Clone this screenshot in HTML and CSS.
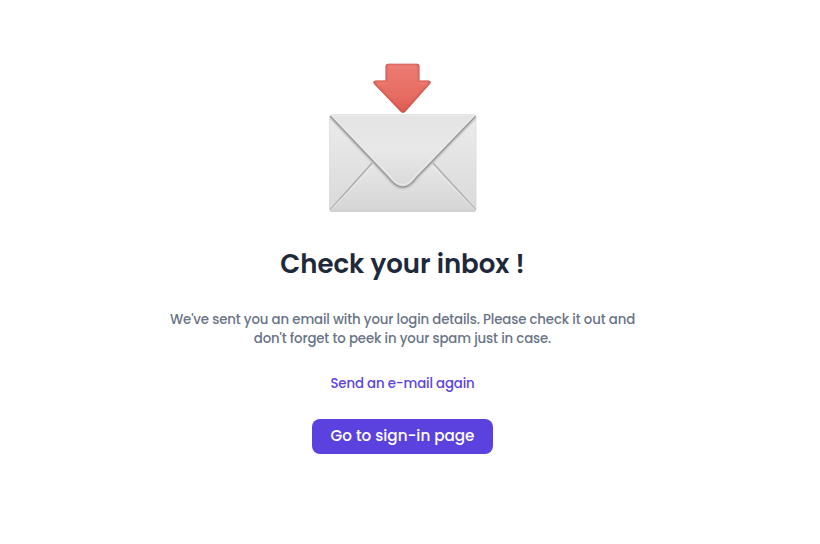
FILE: index.html
```html
<!DOCTYPE html>
<html lang="en">
<head>
<meta charset="utf-8">
<title>Check your inbox</title>
<link rel="stylesheet" href="styles.css">
</head>
<body>
<main class="confirmation">
  <svg class="illustration" viewBox="0 0 150 154" aria-hidden="true">
    <defs>
      <linearGradient id="back" x1="0" y1="0" x2="0" y2="1"><stop offset="0" stop-color="#ececed"/><stop offset="1" stop-color="#d9d9da"/></linearGradient>
      <linearGradient id="bottom" x1="0" y1="0" x2="0" y2="1"><stop offset="0" stop-color="#e7e7e8"/><stop offset=".9" stop-color="#d7d7d8"/><stop offset="1" stop-color="#d0d0d1"/></linearGradient>
      <linearGradient id="flap" x1="0" y1="0" x2="0" y2="1"><stop offset="0" stop-color="#e4e4e5"/><stop offset=".5" stop-color="#e8e8e9"/><stop offset="1" stop-color="#d9d9da"/></linearGradient>
      <linearGradient id="arrow" x1="0" y1="0" x2="0" y2="1"><stop offset="0" stop-color="#e8776e"/><stop offset=".12" stop-color="#ec7a71"/><stop offset=".65" stop-color="#e66c61"/><stop offset="1" stop-color="#d9564c"/></linearGradient>
      <clipPath id="envelope"><rect x="1.3" y="53.5" width="147" height="97.5" rx="3"/></clipPath>
      <clipPath id="arrow-shape"><path d="M16.500 2H44Q47 2 47 5V19H56Q60 20 57 23L33 50Q30.500 52.500 28 50L2 23Q-1 20 3 19H13V5Q13 2 16.500 2Z"/></clipPath>
      <filter id="soft" x="-20%" y="-20%" width="140%" height="140%"><feGaussianBlur stdDeviation=".8"/></filter>
    </defs>
    <g clip-path="url(#envelope)">
      <rect x="1" y="53" width="148" height="99" fill="url(#back)"/>
      <path d="M1 151L45 103L75 128L105 103L149 151Z" fill="url(#bottom)"/>
      <path d="M2 149L44 102M148 149L105 102" fill="none" stroke="#adadaf" stroke-width="1.400"/>
      <path d="M1 150.700L45 105M149 150.700L105 105" fill="none" stroke="#efefef" stroke-width=".8"/>
      <path d="M2 55L61 117Q75 135 88 117L148 55" fill="none" stroke="#9c9c9f" stroke-width="2.500" filter="url(#soft)"/>
      <path d="M2 53L61 116Q75 135 88 116L148 53Z" fill="url(#flap)"/>
      <path d="M2 55L61 117Q75 135 88 117L148 55" fill="none" stroke="#909094" stroke-width="1"/>
      <path d="M4 55L62 115Q75 132 87 115L146 55" fill="none" stroke="#eeeeef" stroke-width="1"/>
      <rect x="1.300" y="53.500" width="147" height="97.500" rx="3" fill="none" stroke="#d2d2d3" stroke-width=".8"/>
      <path d="M3 54H147" stroke="#eeeeee"/>
    </g>
    <g transform="translate(44.500 .5)" clip-path="url(#arrow-shape)">
      <path d="M0 0H60V54H0Z" fill="url(#arrow)"/>
      <path d="M16.500 2H44Q47 2 47 5V19H56Q60 20 57 23L33 50Q30.500 52.500 28 50L2 23Q-1 20 3 19H13V5Q13 2 16.500 2Z" fill="none" stroke="#c9544b" stroke-width="2" filter="url(#soft)"/>
      <path d="M16 4.500H44M4 21.500H15M46 21.500H55" stroke="#f18c83" filter="url(#soft)"/>
    </g>
  </svg>
  <h1 class="title">Check your inbox !</h1>
  <p class="message"><span class="line">We've sent you an email with your login details. Please check it out and</span> <span class="line">don't forget to peek in your spam just in case.</span></p>
  <a class="resend">Send an e-mail again</a>
  <a class="button">Go to sign-in page</a>
</main>
</body>
</html>
```
FILE: styles.css
```css
body {
  margin: 0;
  background: #fff;
  font-family: Poppins, Inter, sans-serif;
}

.confirmation {
  width: 805px;
  height: 544px;
  box-sizing: border-box;
  padding-top: 61px;
  display: flex;
  flex-direction: column;
  align-items: center;
  white-space: nowrap;
}

.illustration {
  width: 150px;
  height: 154px;
  flex: none;
}

.title {
  margin: 29px 0 0;
  font-size: 26px;
  line-height: 40px;
  font-weight: 600;
  color: #20293a;
}

.message {
  margin: 26px 0 0;
  text-align: center;
  font-size: 13.3px;
  letter-spacing: -0.137px;
  line-height: 19px;
  font-weight: 500;
  color: #697386;
}

.line {
  display: block;
}

.resend {
  margin-top: 26px;
  font-size: 13.3px;
  letter-spacing: -0.14px;
  line-height: 20px;
  font-weight: 500;
  color: #5d43dc;
}

.button {
  box-sizing: border-box;
  margin-top: 25px;
  width: 181px;
  height: 35px;
  padding-bottom: 2px;
  border-radius: 8px;
  display: flex;
  align-items: center;
  justify-content: center;
  background: #5b42df;
  color: #fff;
  font-size: 15.2px;
  line-height: 33px;
  font-weight: 500;
}
```
